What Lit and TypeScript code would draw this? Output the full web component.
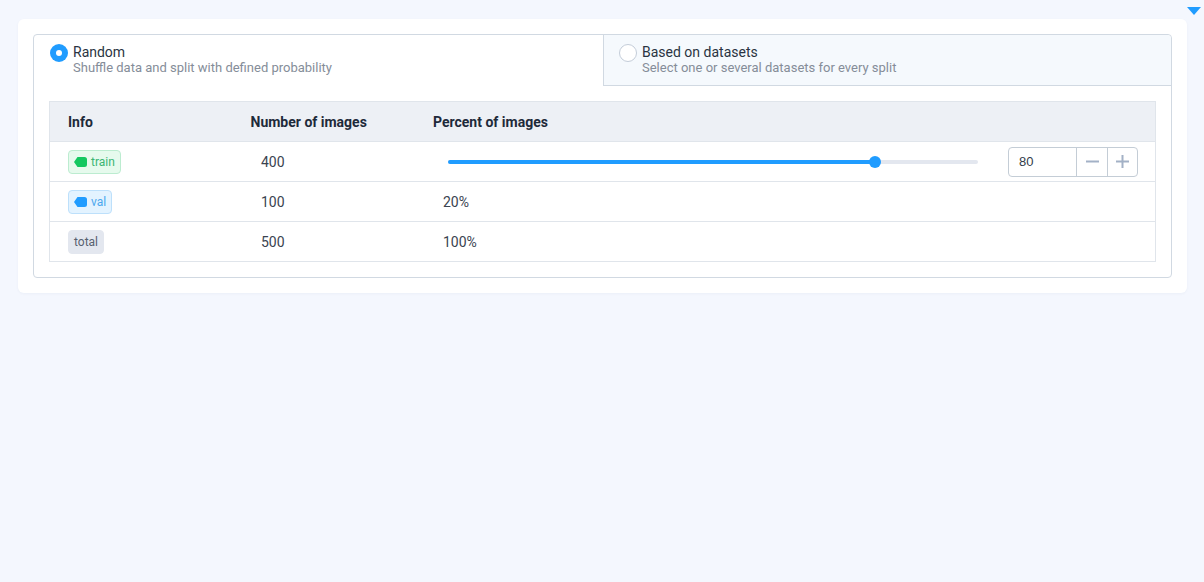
import { LitElement, html, css } from "lit";
import { customElement } from "lit/decorators.js";

@customElement("app-root")
export class AppRoot extends LitElement {
  static styles = css`
    :host { display: block; min-height: 582px; background: #f4f7fe; font-family: Roboto, sans-serif; color: #1f2937; position: relative; box-sizing: border-box; padding: 19px 17px 0 18px; }
    * { box-sizing: border-box; }
    .caret { position: absolute; left: 1187px; top: 7px; width: 14px; height: 8px; background: #209cff; clip-path: polygon(0 0, 100% 0, 50% 100%); }
    .card { background: #fff; border-radius: 6px; padding: 15px; box-shadow: 0 1px 3px rgba(30,50,90,.04); height: 274px; }
    .box { border: 1px solid #d1d9e2; border-radius: 4px; height: 244px; }
    .tabs { display: grid; grid-template-columns: 569px 1fr; height: 51px; }
    .tab { display: flex; gap: 5px; padding: 7px 16px 0 16px; align-items: flex-start; }
    .tab.off { background: #f5f9fd; border-left: 1px solid #d1d9e2; border-bottom: 1px solid #d1d9e2; border-top-right-radius: 4px; padding-left: 15px; }
    .radio { width: 18px; height: 18px; border-radius: 50%; flex: none; margin-top: 2px; display: flex; align-items: center; justify-content: center; }
    .radio.on { background: #209cff; }
    .radio.on::after { content: ""; width: 6px; height: 6px; background: #fff; border-radius: 50%; }
    .radio.blank { background: #fff; border: 1px solid #c4cdd9; }
    .title { font-size: 14px; line-height: 18px; color: #2a3442; margin-top: 1px; }
    .desc { font-size: 13px; line-height: 14px; color: #858d99; }
    .wrap { padding: 15px 15px 0; }
    .table { border: 1px solid #e0e5eb; }
    .row { display: grid; grid-template-columns: 182.5px 182.5px 1fr; height: 40px; align-items: center; border-bottom: 1px solid #e0e5eb; font-size: 14px; color: #3a4350; }
    .row:last-child { border-bottom: none; height: 39px; }
    .head { background: #edf0f5; font-weight: 700; color: #1e2a3a; }
    .head > div { padding-left: 18px; }
    .c1 { padding-left: 18px; display: flex; }
    .c2 { padding-left: 28.5px; }
    .c3 { padding-left: 28px; }
    .tag { height: 24px; border-radius: 4px; display: inline-flex; align-items: center; gap: 4px; font-size: 12px; padding: 0 5px; border: 1px solid; }
    .tag svg { display: block; }
    .train { background: #e6faed; border-color: #bcecd0; color: #3bb574; }
    .val { background: #e3f3ff; border-color: #bde0fb; color: #4ba8ee; }
    .total { background: #e3e7ef; border-color: #e3e7ef; color: #56616f; }
    .ctrl { display: flex; align-items: center; padding-left: 33px; padding-right: 17px; }
    .slider { width: 530px; height: 4px; border-radius: 2px; background: #e3e7ef; position: relative; }
    .fill { height: 4px; border-radius: 2px; background: #209cff; }
    .thumb { position: absolute; top: -4px; width: 12px; height: 12px; border-radius: 50%; background: #209cff; margin-left: -6px; }
    .num { margin-left: auto; width: 130px; height: 30px; border: 1px solid #c4cdd6; border-radius: 4px; display: flex; font-size: 13px; font-family: "Liberation Sans", Arial, sans-serif; color: #333c49; background: #fff; }
    .val-box { flex: none; width: 67px; padding-left: 10px; display: flex; align-items: center; }
    .btn { flex: none; width: 31px; border-left: 1px solid #c4cdd6; display: flex; align-items: center; justify-content: center; }
    .btn.last { width: 30px; }
  `;

  private tagIcon(color: string) {
    return html`<svg width="13" height="10" viewBox="0 0 13 10"><path d="M3.5 0H10.5A2.5 2.5 0 0 1 13 2.5v5A2.5 2.5 0 0 1 10.5 10H3.5L0 5z" fill=${color}></path></svg>`;
  }

  render() {
    return html`
      <div class="caret"></div>
      <div class="card">
        <div class="box">
          <div class="tabs">
            <div class="tab">
              <span class="radio on"></span>
              <div><div class="title">Random</div><div class="desc">Shuffle data and split with defined probability</div></div>
            </div>
            <div class="tab off">
              <span class="radio blank"></span>
              <div><div class="title">Based on datasets</div><div class="desc">Select one or several datasets for every split</div></div>
            </div>
          </div>
          <div class="wrap">
            <div class="table">
              <div class="row head"><div>Info</div><div>Number of images</div><div>Percent of images</div></div>
              <div class="row">
                <div class="c1"><span class="tag train">${this.tagIcon("#14c860")}train</span></div>
                <div class="c2">400</div>
                <div class="ctrl">
                  <div class="slider"><div class="fill" style="width:427px"></div><div class="thumb" style="left:427px"></div></div>
                  <div class="num">
                    <div class="val-box">80</div>
                    <div class="btn"><svg width="13" height="13" viewBox="0 0 13 13"><path d="M0 6.5h13" stroke="#a3b1c6" stroke-width="2"></path></svg></div>
                    <div class="btn last"><svg width="13" height="13" viewBox="0 0 13 13"><path d="M0 6.5h13M6.5 0v13" stroke="#a3b1c6" stroke-width="2"></path></svg></div>
                  </div>
                </div>
              </div>
              <div class="row">
                <div class="c1"><span class="tag val">${this.tagIcon("#209cff")}val</span></div>
                <div class="c2">100</div>
                <div class="c3">20%</div>
              </div>
              <div class="row">
                <div class="c1"><span class="tag total">total</span></div>
                <div class="c2">500</div>
                <div class="c3">100%</div>
              </div>
            </div>
          </div>
        </div>
      </div>
    `;
  }
}
